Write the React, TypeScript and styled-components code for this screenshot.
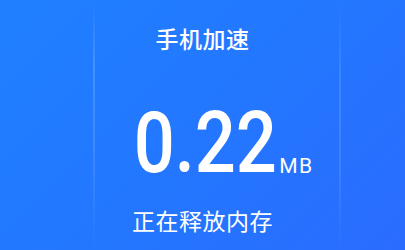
import React from "react";
import styled, { createGlobalStyle } from "styled-components";

const GlobalStyle = createGlobalStyle`
  html, body {
    margin: 0;
    padding: 0;
  }
  body {
    font-family: "Noto Sans CJK SC", "Noto Sans", sans-serif;
  }
`;

/* the two faint vertical rules are part of the backdrop */
const Page = styled.div`
  width: 405px;
  height: 250px;
  overflow: hidden;
  display: flex;
  flex-direction: column;
  align-items: center;
  padding-top: 26px;
  box-sizing: border-box;
  color: #ffffff;
  background:
    linear-gradient(
        180deg,
        rgba(255, 255, 255, 0) 0%,
        rgba(255, 255, 255, 0.16) 25%,
        rgba(255, 255, 255, 0.12) 60%,
        rgba(255, 255, 255, 0) 100%
      )
      93px 0 / 2px 100% no-repeat,
    linear-gradient(
        180deg,
        rgba(255, 255, 255, 0) 0%,
        rgba(255, 255, 255, 0.12) 30%,
        rgba(255, 255, 255, 0.1) 70%,
        rgba(255, 255, 255, 0) 100%
      )
      339px 0 / 2px 100% no-repeat,
    linear-gradient(135deg, #1f80ff 0%, #2377ff 50%, #2a6cff 100%);
`;

const Title = styled.div`
  font-size: 23px;
  line-height: 24px;
  font-weight: 500;
  letter-spacing: 0.5px;
`;

const Amount = styled.div`
  position: relative;
  margin-top: 50px;
  margin-left: 5px;
  font-family: "Roboto", sans-serif;
  font-size: 86px;
  line-height: 86px;
  font-weight: 500;
`;

/* narrow the digits to the condensed look of the original face */
const Digits = styled.span`
  display: inline-block;
  transform: scaleX(0.84);
  transform-origin: center;
`;

const Unit = styled.span`
  position: absolute;
  left: 100%;
  bottom: 10px;
  margin-left: -11px;
  font-family: "Roboto", sans-serif;
  font-size: 21px;
  line-height: 20px;
  font-weight: 400;
  letter-spacing: 1.5px;
`;

const Status = styled.div`
  margin-top: 22px;
  font-size: 23px;
  line-height: 24px;
  font-weight: 400;
  letter-spacing: 0.5px;
`;

export default function App() {
  return (
    <>
      <GlobalStyle />
      <Page>
        <Title>手机加速</Title>
        <Amount>
          <Digits>0.22</Digits>
          <Unit>MB</Unit>
        </Amount>
        <Status>正在释放内存</Status>
      </Page>
    </>
  );
}
